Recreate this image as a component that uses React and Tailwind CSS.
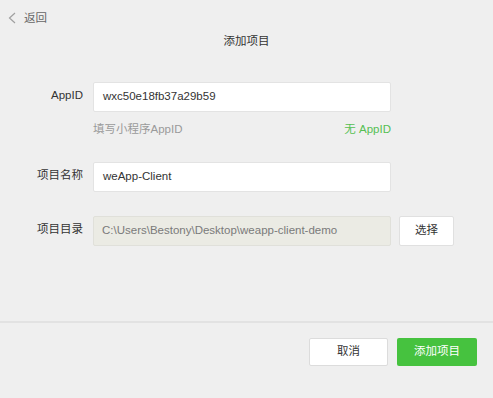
export default function App() {
  const font = { fontFamily: '"Liberation Sans", "Noto Sans CJK SC", sans-serif' };
  return (
    <div className="w-[493px] h-[398px] bg-[#efefef] overflow-hidden flex flex-col" style={font}>
      <div className="flex items-center h-4 mt-[10px] pl-[8px] text-[11.5px] text-[#666]">
        <svg width="8" height="12" viewBox="0 0 8 12" className="mr-[8px]">
          <polyline points="7,1 1.5,6 7,11" fill="none" stroke="#a0a0a0" strokeWidth="1.2" />
        </svg>
        <span className="leading-4">返回</span>
      </div>
      <div className="mt-[7px] h-4 leading-4 text-center text-[11.5px] text-[#333]">添加项目</div>

      <div className="mt-[33px] flex flex-col">
        <div className="flex items-center">
          <div className="w-[83px] text-right text-[11.5px] text-[#333] pb-[2px]">AppID</div>
          <div className="ml-[10px] w-[298px] h-[30px] bg-white border border-[#e3e3e3] rounded-[2px] flex items-center pl-[9px] text-[11.5px] text-[#333]">
            wxc50e18fb37a29b59
          </div>
        </div>
        <div className="flex mt-[9px] h-4 leading-4 ml-[93px] w-[298px] justify-between text-[11.5px]">
          <span className="text-[#9a9a9a]">填写小程序AppID</span>
          <span className="text-[#55bf52]">无 AppID</span>
        </div>
        <div className="flex items-center mt-[25px]">
          <div className="w-[83px] text-right text-[11.5px] text-[#333] pb-[2px]">项目名称</div>
          <div className="ml-[10px] w-[298px] h-[30px] bg-white border border-[#e3e3e3] rounded-[2px] flex items-center pl-[9px] text-[11.5px] text-[#333]">
            weApp-Client
          </div>
        </div>
        <div className="flex items-center mt-[24px]">
          <div className="w-[83px] text-right text-[11.5px] text-[#333] pb-[2px]">项目目录</div>
          <div className="ml-[10px] w-[298px] h-[30px] bg-[#ebebe4] border border-[#e0e0da] rounded-[2px] flex items-center pl-[8px] text-[11.5px] text-[#7a7a7a]">
            C:\Users\Bestony\Desktop\weapp-client-demo
          </div>
          <div className="ml-[8px] w-[55px] h-[30px] bg-white border border-[#e0e0e0] rounded-[2px] flex items-center justify-center text-[11.5px] text-[#333]">
            选择
          </div>
        </div>
      </div>

      <div className="mt-[75px] h-[2px] bg-[#e2e2e2]" />

      <div className="mt-[15px] flex justify-end pr-[16px] gap-[9px]">
        <div className="w-[79px] h-[28px] bg-white border border-[#dcdcdc] rounded-[2px] flex items-center justify-center text-[11.5px] text-[#333]">
          取消
        </div>
        <div className="w-[80px] h-[28px] bg-[#46c23f] rounded-[2px] flex items-center justify-center text-[11.5px] text-white">
          添加项目
        </div>
      </div>
    </div>
  );
}
